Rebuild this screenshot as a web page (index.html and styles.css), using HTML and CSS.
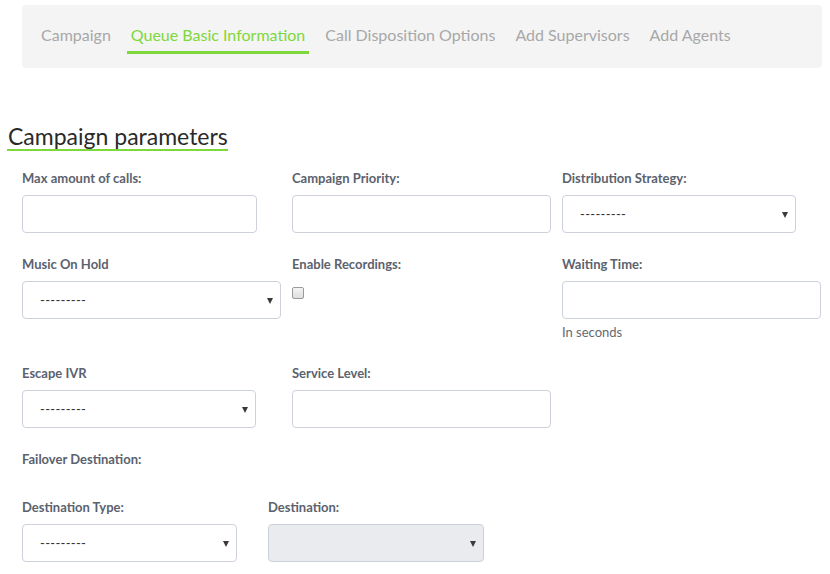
FILE: index.html
```html
<!DOCTYPE html>
<html>
<head>
<meta charset="utf-8">
<link rel="stylesheet" href="styles.css">
</head>
<body>
<nav class="tabs">
  <a class="tab">Campaign</a>
  <a class="tab active">Queue Basic Information</a>
  <a class="tab">Call Disposition Options</a>
  <a class="tab">Add Supervisors</a>
  <a class="tab">Add Agents</a>
</nav>

<h2 class="section-title">Campaign parameters</h2>

<div class="form">
  <div class="row">
    <div class="col">
      <label class="lbl">Max amount of calls:</label>
      <input class="ctrl w235" type="text">
    </div>
    <div class="col">
      <label class="lbl">Campaign Priority:</label>
      <input class="ctrl w259" type="text">
    </div>
    <div class="col">
      <label class="lbl">Distribution Strategy:</label>
      <div class="sel w234"><span class="sel-text">---------</span><span class="caret"></span></div>
    </div>
  </div>

  <div class="row">
    <div class="col">
      <label class="lbl">Music On Hold</label>
      <div class="sel w259"><span class="sel-text">---------</span><span class="caret"></span></div>
    </div>
    <div class="col">
      <label class="lbl">Enable Recordings:</label>
      <span class="check"></span>
    </div>
    <div class="col">
      <label class="lbl">Waiting Time:</label>
      <input class="ctrl w259" type="text">
      <div class="help">In seconds</div>
    </div>
  </div>

  <div class="row">
    <div class="col">
      <label class="lbl">Escape IVR</label>
      <div class="sel w234"><span class="sel-text">---------</span><span class="caret"></span></div>
    </div>
    <div class="col">
      <label class="lbl">Service Level:</label>
      <input class="ctrl w259" type="text">
    </div>
  </div>

  <div class="row single">
    <label class="lbl">Failover Destination:</label>
  </div>

  <div class="row">
    <div class="col col-b">
      <label class="lbl">Destination Type:</label>
      <div class="sel w215"><span class="sel-text">---------</span><span class="caret"></span></div>
    </div>
    <div class="col col-b">
      <label class="lbl">Destination:</label>
      <div class="sel w216 disabled"><span class="sel-text"></span><span class="caret"></span></div>
    </div>
  </div>
</div>
</body>
</html>
```

FILE: styles.css
```css
* { box-sizing: border-box; }
html, body { margin: 0; background: #fff; }
body {
  padding: 5px 8px 0 8px;
  font-family: Lato, "Open Sans", sans-serif;
  color: #333;
  overflow: hidden;
}
.tabs {
  margin-left: 14px;
  width: 800px;
  height: 63px;
  background: #f4f4f4;
  border-radius: 4px;
  display: flex;
  align-items: flex-start;
  gap: 12px;
  padding: 0 14px 0 15px;
}
.tab {
  padding: 16px 4px 2px 4px;
  font-size: 16px;
  line-height: 28px;
  color: #a8a8a8;
  border-bottom: 3px solid transparent;
}
.tab.active {
  color: #7ed83a;
  border-bottom-color: #7ed83a;
}
.section-title {
  display: inline-block;
  margin: 55px 0 0 -1px;
  padding: 0 0 0 1px;
  font-size: 23px;
  line-height: 26px;
  font-weight: 400;
  color: #2a2a2a;
  border-bottom: 2px solid #7ed83a;
}
.form {
  padding: 18px 0 0 14px;
}
.row {
  display: flex;
  margin-bottom: 22px;
}
.row.single { margin-bottom: 22px; }
.row.single .lbl { margin-bottom: 8px; }
.col {
  flex: 0 0 270px;
  display: flex;
  flex-direction: column;
  align-items: flex-start;
}
.col.col-b { flex-basis: 246px; }
.lbl {
  font-size: 13px;
  line-height: 18px;
  font-weight: 700;
  color: #5b626e;
  margin-bottom: 8px;
}
.ctrl {
  height: 38px;
  border: 1px solid #cdd1db;
  border-radius: 4px;
  background: #fff;
  margin: 0;
  padding: 0 12px;
  font: inherit;
}
.w235 { width: 235px; }
.w259 { width: 259px; }
.w234 { width: 234px; }
.w215 { width: 215px; }
.w216 { width: 216px; }
.sel {
  position: relative;
  height: 38px;
  border: 1px solid #cdd1db;
  border-radius: 4px;
  background: #fff;
  display: flex;
  align-items: center;
  padding-left: 17px;
}
.sel.disabled { background: #e9ebef; }
.sel-text {
  font-size: 13px;
  color: #333;
  letter-spacing: 0.3px;
}
.caret {
  position: absolute;
  right: 7px;
  top: 16px;
  width: 0;
  height: 0;
  border-left: 3.5px solid transparent;
  border-right: 3.5px solid transparent;
  border-top: 6px solid #3a3a3a;
}
.check {
  margin-top: 6px;
  width: 12px;
  height: 12px;
  border: 1px solid #9a9a9a;
  border-radius: 2px;
  background: linear-gradient(#f4f4f4, #dedede);
}
.help {
  margin-top: 4px;
  font-size: 13px;
  line-height: 19px;
  color: #666a70;
}
```
